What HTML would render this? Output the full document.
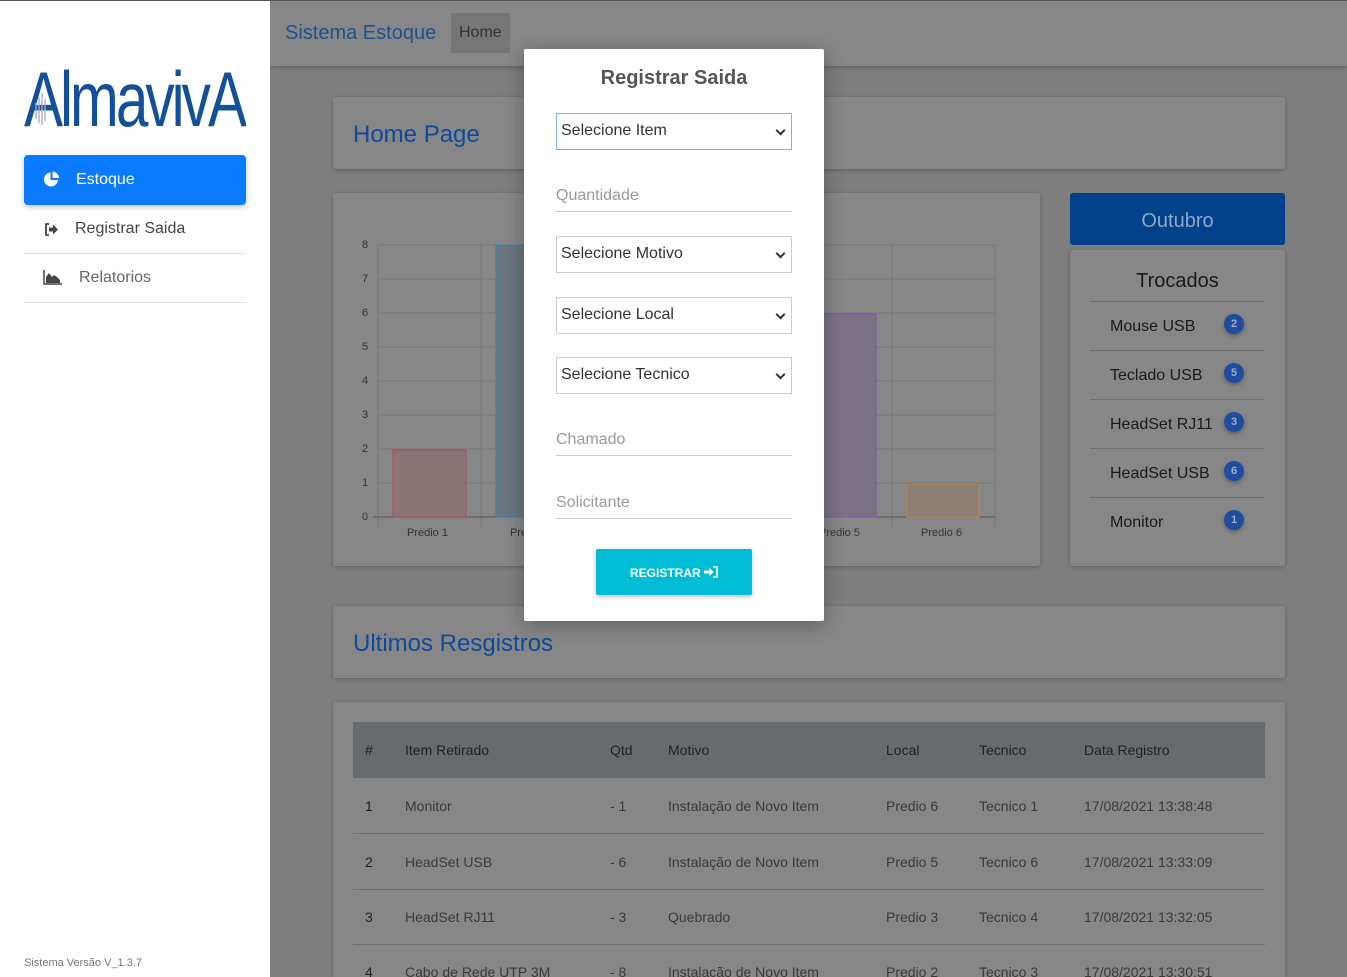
<!DOCTYPE html>
<html style="overflow:hidden;height:977px"><head><meta charset="utf-8"><style>
*{box-sizing:border-box;margin:0;padding:0}
body{width:1347px;height:977px;overflow:hidden;font-family:"Liberation Sans",sans-serif;background:#7e7e7e;position:relative}
.a{position:absolute}
.card{position:absolute;background:#878787;border-radius:3px;box-shadow:0 1px 4px rgba(0,0,0,.25)}
.sb{position:absolute;left:0;top:0;width:270px;height:977px;background:#fff;border-top:1px solid #555}
.nav{position:absolute;left:24px;width:222px;height:49px;font-size:16px;color:#444;border-bottom:1px solid #e0e0e0}
.m{position:absolute;left:524px;top:49px;width:300px;height:572px;background:#fff;border-radius:2px;box-shadow:0 4px 20px rgba(0,0,0,.3)}
.sel{position:absolute;left:32px;width:236px;height:37px;border:1px solid #ccc;font-size:16px;color:#333;padding:8px 4px}
.sel:after{content:"";position:absolute;right:7px;top:13px;width:5px;height:5px;border-right:2px solid #333;border-bottom:2px solid #333;transform:rotate(45deg)}
.inp{position:absolute;left:32px;width:236px;border-bottom:1px solid #ccc;font-size:16px;color:#999;padding-bottom:6px}
.td{position:absolute;font-size:14px;color:#3a3a3a}
.li{position:absolute;left:20px;width:174px;height:49px;border-top:1px solid #6f6f6f;font-size:16px;color:#1a1a1a;padding:16px 0 0 20px}
.bd{position:absolute;left:134px;top:12px;width:20px;height:20px;border-radius:50%;background:#1e4da0;color:#aab;font-size:11px;font-weight:bold;text-align:center;line-height:20px;box-shadow:0 2px 4px rgba(0,0,0,.3)}
</style></head><body>
<div class="a" style="left:270px;top:0;width:1077px;height:66px;background:#878787;border-top:1px solid #555;box-shadow:0 2px 4px rgba(0,0,0,.2)"></div>
<div class="a" style="left:285px;top:22px;font-size:20px;color:#1d5291">Sistema Estoque</div>
<div class="a" style="left:451px;top:13px;width:59px;height:40px;background:#767676;font-size:16px;color:#333;padding:11px 0 0 8px">Home</div>

<div class="card" style="left:333px;top:97px;width:952px;height:72px"><div class="a" style="left:20px;top:24px;font-size:24px;color:#0e4a99">Home Page</div></div>

<div class="card" style="left:333px;top:193px;width:707px;height:373px"></div>
<svg class="a" style="left:333px;top:193px" width="707" height="373">
<g stroke="#777" stroke-width="1">
<line x1="45" y1="52" x2="662" y2="52"/><line x1="45" y1="86" x2="662" y2="86"/><line x1="45" y1="120" x2="662" y2="120"/><line x1="45" y1="154" x2="662" y2="154"/><line x1="45" y1="188" x2="662" y2="188"/><line x1="45" y1="222" x2="662" y2="222"/><line x1="45" y1="256" x2="662" y2="256"/><line x1="45" y1="290" x2="662" y2="290"/>
<line x1="45" y1="52" x2="45" y2="334"/><line x1="148" y1="52" x2="148" y2="334"/><line x1="559" y1="52" x2="559" y2="334"/><line x1="662" y1="52" x2="662" y2="334"/>
</g>
<line x1="40" y1="324" x2="662" y2="324" stroke="#555"/>
<rect x="60" y="257" width="73" height="67" fill="#8a7476" stroke="#b0485e"/>
<rect x="163" y="52" width="73" height="272" fill="#6a7680" stroke="#3c7fb0"/>
<rect x="472" y="121" width="71" height="203" fill="#7b7385" stroke="#7059b5"/>
<rect x="574" y="291" width="72" height="33" fill="#8b7f75" stroke="#b9843e"/>
<g font-size="11" fill="#333" font-family="Liberation Sans">
<text x="29" y="55">8</text><text x="29" y="89">7</text><text x="29" y="123">6</text><text x="29" y="157">5</text><text x="29" y="191">4</text><text x="29" y="225">3</text><text x="29" y="259">2</text><text x="29" y="293">1</text><text x="29" y="327">0</text>
<text x="74" y="343">Predio 1</text><text x="177" y="343">Predio 2</text><text x="486" y="343">Predio 5</text><text x="588" y="343">Predio 6</text></g>
</svg>

<div class="a" style="left:1070px;top:193px;width:215px;height:52px;background:#00418a;border-radius:3px;color:#8ea8c8;font-size:20px;text-align:center;padding-top:17px">Outubro</div>
<div class="card" style="left:1070px;top:250px;width:215px;height:316px">
<div class="a" style="left:0;width:215px;top:20px;text-align:center;font-size:20px;color:#1a1a1a">Trocados</div>
<div class="li" style="top:51px">Mouse USB<div class="bd">2</div></div>
<div class="li" style="top:100px">Teclado USB<div class="bd">5</div></div>
<div class="li" style="top:149px">HeadSet RJ11<div class="bd">3</div></div>
<div class="li" style="top:198px">HeadSet USB<div class="bd">6</div></div>
<div class="li" style="top:247px">Monitor<div class="bd">1</div></div>
</div>

<div class="card" style="left:333px;top:606px;width:952px;height:72px"><div class="a" style="left:20px;top:24px;font-size:24px;color:#0e4a99">Ultimos Resgistros</div></div>

<div class="card" style="left:333px;top:702px;width:952px;height:275px;border-radius:3px 3px 0 0;overflow:hidden"></div>
<div class="a" style="left:353px;top:722px;width:912px;height:56px;background:#676b6e"></div>
<div class="a" style="left:353px;top:833px;width:912px;border-top:1px solid #6e6e6e"></div>
<div class="a" style="left:353px;top:889px;width:912px;border-top:1px solid #6e6e6e"></div>
<div class="a" style="left:353px;top:944px;width:912px;border-top:1px solid #6e6e6e"></div>
<div class="td" style="left:365px;top:742px;color:#222">#</div><div class="td" style="left:405px;top:742px;color:#222">Item Retirado</div><div class="td" style="left:610px;top:742px;color:#222">Qtd</div><div class="td" style="left:668px;top:742px;color:#222">Motivo</div><div class="td" style="left:886px;top:742px;color:#222">Local</div><div class="td" style="left:979px;top:742px;color:#222">Tecnico</div><div class="td" style="left:1084px;top:742px;color:#222">Data Registro</div>

<div class="td" style="left:365px;top:798px;color:#222">1</div><div class="td" style="left:405px;top:798px">Monitor</div><div class="td" style="left:610px;top:798px">- 1</div><div class="td" style="left:668px;top:798px">Instalação de Novo Item</div><div class="td" style="left:886px;top:798px">Predio 6</div><div class="td" style="left:979px;top:798px">Tecnico 1</div><div class="td" style="left:1084px;top:798px">17/08/2021 13:38:48</div>
<div class="td" style="left:365px;top:854px;color:#222">2</div><div class="td" style="left:405px;top:854px">HeadSet USB</div><div class="td" style="left:610px;top:854px">- 6</div><div class="td" style="left:668px;top:854px">Instalação de Novo Item</div><div class="td" style="left:886px;top:854px">Predio 5</div><div class="td" style="left:979px;top:854px">Tecnico 6</div><div class="td" style="left:1084px;top:854px">17/08/2021 13:33:09</div>
<div class="td" style="left:365px;top:909px;color:#222">3</div><div class="td" style="left:405px;top:909px">HeadSet RJ11</div><div class="td" style="left:610px;top:909px">- 3</div><div class="td" style="left:668px;top:909px">Quebrado</div><div class="td" style="left:886px;top:909px">Predio 3</div><div class="td" style="left:979px;top:909px">Tecnico 4</div><div class="td" style="left:1084px;top:909px">17/08/2021 13:32:05</div>
<div class="td" style="left:365px;top:964px;color:#222">4</div><div class="td" style="left:405px;top:964px">Cabo de Rede UTP 3M</div><div class="td" style="left:610px;top:964px">- 8</div><div class="td" style="left:668px;top:964px">Instalação de Novo Item</div><div class="td" style="left:886px;top:964px">Predio 2</div><div class="td" style="left:979px;top:964px">Tecnico 3</div><div class="td" style="left:1084px;top:964px">17/08/2021 13:30:51</div>

<div class="sb">
<svg class="a" style="left:24px;top:52px" width="222" height="76">
<text x="0" y="73" font-family="Liberation Sans" font-size="78" fill="#14509a" textLength="220" lengthAdjust="spacingAndGlyphs" letter-spacing="-4">AlmavivA</text>
<g stroke="#a9a9d6" stroke-width="1.3"><line x1="12" y1="50" x2="12" y2="66"/><line x1="15" y1="44" x2="15" y2="70"/><line x1="18" y1="40" x2="18" y2="72"/><line x1="21" y1="46" x2="21" y2="68"/></g>
</svg>
<div class="a" style="left:24px;top:154px;width:222px;height:50px;background:#0a7bff;border-radius:4px;box-shadow:0 2px 6px rgba(0,0,0,.25);color:#fff;font-size:16px;padding:16px 0 0 52px">Estoque
<svg class="a" style="left:19px;top:16px" width="17" height="17"><path d="M7.5 1.5A7 7 0 1 0 15 9H7.5Z" fill="#fff"/><path d="M9.5 0.5V7H16A7 7 0 0 0 9.5 .5Z" fill="#fff"/></svg></div>
<div class="nav" style="top:204px;padding:15px 0 0 51px">Registrar Saida
<svg class="a" style="left:20px;top:18px" width="15" height="13"><path d="M5 1H2v11h3" fill="none" stroke="#444" stroke-width="1.8"/><path d="M5 4.5h4V1.5l5 5-5 5V8.5H5z" fill="#444"/></svg></div>
<div class="nav" style="top:253px;padding:15px 0 0 55px;color:#666">Relatorios
<svg class="a" style="left:19px;top:16px" width="19" height="15"><path d="M1 0v14h18" fill="none" stroke="#444" stroke-width="1.5"/><path d="M3 13V7l3-4 3 4 2-2 3 2 3 3v3z" fill="#444"/></svg></div>
<div class="a" style="left:24px;top:956px;font-size:11px;color:#777">Sistema Versão V_1.3.7</div>
</div>

<div class="m">
<div class="a" style="left:0;width:300px;top:18px;text-align:center;font-size:20px;font-weight:bold;color:#555">Registrar Saida</div>
<div class="sel" style="top:64px;border-color:#7fb0ea">Selecione Item</div>
<div class="inp" style="top:138px">Quantidade</div>
<div class="sel" style="top:187px">Selecione Motivo</div>
<div class="sel" style="top:248px">Selecione Local</div>
<div class="sel" style="top:308px">Selecione Tecnico</div>
<div class="inp" style="top:382px">Chamado</div>
<div class="inp" style="top:445px">Solicitante</div>
<div class="a" style="left:72px;top:500px;width:156px;height:46px;background:#00bcd4;border-radius:2px;box-shadow:0 2px 5px rgba(0,0,0,.25);color:#fff;font-size:12px;font-weight:bold;padding:17px 0 0 34px">REGISTRAR
<svg class="a" style="left:108px;top:17px" width="14" height="12"><path d="M0 4.5h5V1.5l4.5 4.5L5 10.5V7.5H0z" fill="#fff"/><path d="M9 1h4v10H9" fill="none" stroke="#fff" stroke-width="1.6"/></svg></div>
</div>
</body></html>
